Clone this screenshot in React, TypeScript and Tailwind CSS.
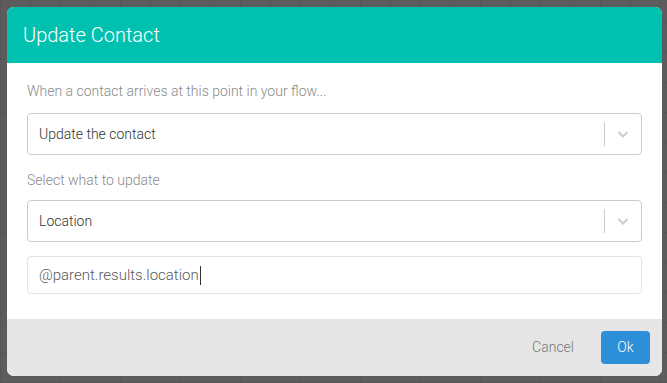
import React from "react";

function Chevron() {
  return (
    <svg width="14" height="14" viewBox="0 0 14 14" fill="none">
      <path d="M2.5 5 L7 9.5 L11.5 5" stroke="#cccccc" strokeWidth="2" />
    </svg>
  );
}

function Select({ value }: { value: string }) {
  return (
    <div className="flex h-[42px] items-center rounded-[4px] border border-[#cccccc] bg-white">
      <div className="flex-1 pl-[11px] text-[14px] text-[#333333]">{value}</div>
      <div className="h-[24px] w-px bg-[#cccccc]" />
      <div className="flex w-[36px] items-center justify-center">
        <Chevron />
      </div>
    </div>
  );
}

export default function App() {
  return (
    <div
      className="h-[383px] w-[667px] bg-[#5c5c5c] bg-[linear-gradient(#565656_1px,transparent_1px),linear-gradient(90deg,#565656_1px,transparent_1px)] bg-[size:30px_30px] bg-[position:0px_22px] p-[7px] pr-[5px]"
      style={{ fontFamily: "Roboto, 'Liberation Sans', sans-serif" }}
    >
      <div className="flex h-[369px] flex-col overflow-hidden rounded-[7px] bg-white font-light">
        <div className="flex h-[56px] items-center bg-[#00c1b0] pl-[16px] text-[20px] text-white">
          Update Contact
        </div>
        <div className="flex flex-1 flex-col pl-[20px] pr-[20px] pt-[18px]">
          <div className="text-[14px] leading-[20px] text-[#8a8a8a]">
            When a contact arrives at this point in your flow...
          </div>
          <div className="mt-[12px]">
            <Select value="Update the contact" />
          </div>
          <div className="mt-[15px] text-[14px] leading-[20px] text-[#8a8a8a]">
            Select what to update
          </div>
          <div className="mt-[10px]">
            <Select value="Location" />
          </div>
          <div className="mt-[14px] flex h-[38px] items-center rounded-[4px] border border-[#e3e3e3] pl-[11px] text-[15px] text-[#5a5a5a]">
            @parent.results.location
            <span className="ml-px inline-block h-[19px] w-px bg-[#333333]" />
          </div>
        </div>
        <div className="flex h-[57px] items-center justify-end gap-[27px] bg-[#e6e6e6] pr-[12px] pb-[1px]">
          <span className="text-[14px] text-[#777777]">Cancel</span>
          <button className="h-[33px] w-[49px] rounded-[4px] bg-[#2d8fd8] text-[14px] font-light text-white">
            Ok
          </button>
        </div>
      </div>
    </div>
  );
}
